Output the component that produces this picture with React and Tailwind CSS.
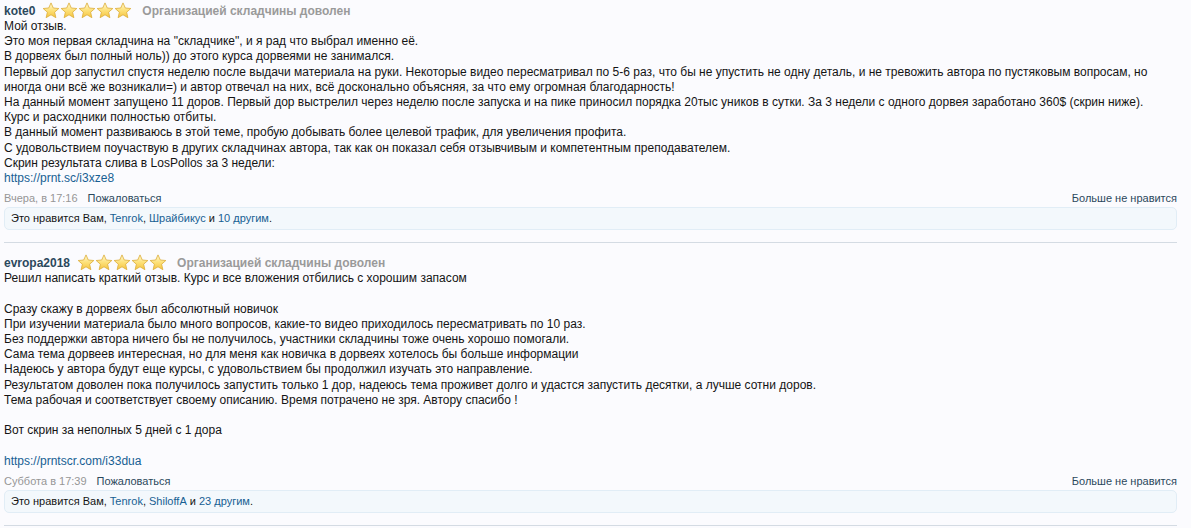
import React from 'react';

const Star = () => (
    <svg width="18" height="17" viewBox="0 0 24 23" className="block">
        <defs>
            <linearGradient id="sg" x1="0" y1="0" x2="0" y2="1">
                <stop offset="0%" stopColor="#fff8d2" />
                <stop offset="50%" stopColor="#fde17a" />
                <stop offset="100%" stopColor="#f5c440" />
            </linearGradient>
        </defs>
        <path
            d="M12 1.2l3.1 6.9 7.5.7-5.7 5 1.7 7.4L12 17.3l-6.6 3.9 1.7-7.4-5.7-5 7.5-.7z"
            fill="url(#sg)"
            stroke="#dcae3a"
            strokeWidth="1.1"
            strokeLinejoin="round"
        />
    </svg>
);

const Stars = () => (
    <div className="flex items-center">
        {[0, 1, 2, 3, 4].map(i => <Star key={i} />)}
    </div>
);

const Post = ({ author, lines, date, likers, others }) => (
    <div className="pt-[2px]">
        <div className="flex items-center h-[17px]">
            <span className="font-bold text-[12px] text-[#2b485c]">{author}</span>
            <div className="ml-[7px]"><Stars /></div>
            <span className="font-bold text-[12px] text-[#9a9a9a] ml-[10px]">Организацией складчины доволен</span>
        </div>
        <div className="text-[12px] leading-[15.2px] text-[#141414]">
            {lines.map((l, i) =>
                l === '' ? <div key={i} className="h-[15.2px]" /> :
                l.startsWith('https') ? <div key={i}><a className="text-[#176093]">{l}</a></div> :
                <div key={i}>{l}</div>
            )}
        </div>
        <div className="flex justify-between items-center h-[16px] mt-[4px]">
            <div>
                <span className="text-[#969696]">{date}</span>
                <a className="text-[#2b485c] ml-[10px]">Пожаловаться</a>
            </div>
            <a className="text-[#2b485c]">Больше не нравится</a>
        </div>
        <div className="mt-[1px] h-[23px] flex items-center px-[6px] text-[#141414] bg-[#f3f8fc] border border-[#e1edf6] rounded-[5px]">
            Это нравится Вам,&nbsp;<a className="text-[#176093]">Tenrok</a>,&nbsp;<a className="text-[#176093]">{likers}</a>&nbsp;и&nbsp;<a className="text-[#176093]">{others}</a>.
        </div>
        <div className="mt-[12px] border-t border-[#d4dbe3]" />
    </div>
);

const post1 = [
    'Мой отзыв.',
    'Это моя первая складчина на "складчике", и я рад что выбрал именно её.',
    'В дорвеях был полный ноль)) до этого курса дорвеями не занимался.',
    'Первый дор запустил спустя неделю после выдачи материала на руки. Некоторые видео пересматривал по 5-6 раз, что бы не упустить не одну деталь, и не тревожить автора по пустяковым вопросам, но',
    'иногда они всё же возникали=) и автор отвечал на них, всё досконально объясняя, за что ему огромная благодарность!',
    'На данный момент запущено 11 доров. Первый дор выстрелил через неделю после запуска и на пике приносил порядка 20тыс уников в сутки. За 3 недели с одного дорвея заработано 360$ (скрин ниже).',
    'Курс и расходники полностью отбиты.',
    'В данный момент развиваюсь в этой теме, пробую добывать более целевой трафик, для увеличения профита.',
    'С удовольствием поучаствую в других складчинах автора, так как он показал себя отзывчивым и компетентным преподавателем.',
    'Скрин результата слива в LosPollos за 3 недели:',
    'https://prnt.sc/i3xze8',
];

const post2 = [
    'Решил написать краткий отзыв. Курс и все вложения отбились с хорошим запасом',
    '',
    'Сразу скажу в дорвеях был абсолютный новичок',
    'При изучении материала было много вопросов, какие-то видео приходилось пересматривать по 10 раз.',
    'Без поддержки автора ничего бы не получилось, участники складчины тоже очень хорошо помогали.',
    'Сама тема дорвеев интересная, но для меня как новичка в дорвеях хотелось бы больше информации',
    'Надеюсь у автора будут еще курсы, с удовольствием бы продолжил изучать это направление.',
    'Результатом доволен пока получилось запустить только 1 дор, надеюсь тема проживет долго и удастся запустить десятки, а лучше сотни доров.',
    'Тема рабочая и соответствует своему описанию. Время потрачено не зря. Автору спасибо !',
    '',
    'Вот скрин за неполных 5 дней с 1 дора',
    '',
    'https://prntscr.com/i33dua',
];

export default function App() {
    return (
        <div className="w-[1191px] h-[528px] overflow-hidden bg-[#fbfbfe] pl-[4px] pr-[14px] text-[11px] font-['Liberation_Sans',Arial,sans-serif]">
            <Post author="kote0" lines={post1} date="Вчера, в 17:16" likers="Шрайбикус" others="10 другим" />
            <div className="h-[9px]" />
            <Post author="evropa2018" lines={post2} date="Суббота в 17:39" likers="ShiloffA" others="23 другим" />
        </div>
    );
}
